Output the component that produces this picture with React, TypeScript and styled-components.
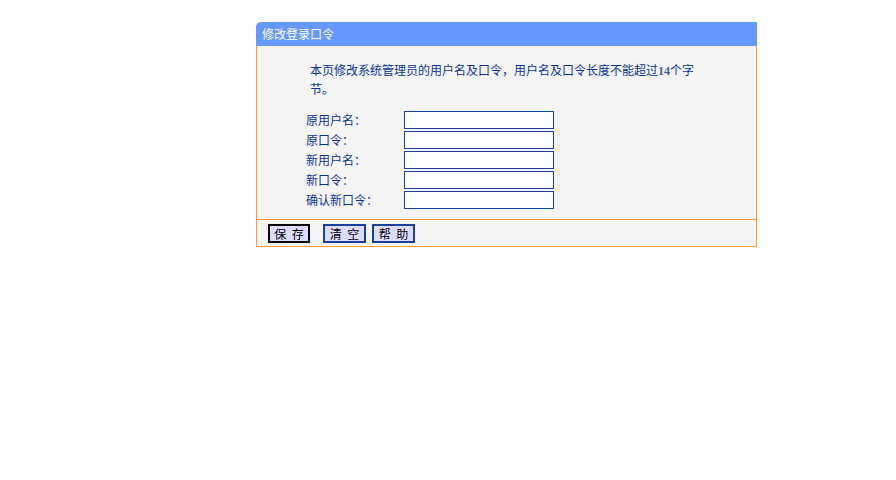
import React from "react";
import styled, { createGlobalStyle } from "styled-components";

const GlobalStyle = createGlobalStyle`
	html, body {
		margin: 0;
		padding: 0;
		background: #ffffff;
	}
	body {
		font-family: "Noto Sans CJK SC", "DejaVu Sans", sans-serif;
		font-size: 12px;
	}
`;

const Page = styled.div`
	padding: 22px 0 0 256px;
`;

const Panel = styled.div`
	width: 501px;
`;

const Header = styled.div`
	height: 24px;
	line-height: 24px;
	background: #6699ff;
	color: #ffffff;
	font-size: 12px;
	padding-left: 6px;
	border-top-left-radius: 5px;
`;

const Body = styled.div`
	background: #f4f4f4;
	border-left: 1px solid #ff9933;
	border-right: 1px solid #ff9933;
	padding: 15px 0 10px 49px;
	height: 148px;
`;

const Intro = styled.p`
	margin: 0 0 13px 4px;
	width: 390px;
	line-height: 18px;
	color: #0a3399;
`;

const Num = styled.span`
	font-family: "Liberation Serif", serif;
	font-weight: bold;
	color: #4a5f99;
`;

const Form = styled.div`
	display: grid;
	grid-template-columns: 98px 150px;
	row-gap: 2px;
`;

const Label = styled.label`
	color: #0a3399;
	line-height: 18px;
	white-space: pre;
`;

const Field = styled.input`
	box-sizing: border-box;
	width: 150px;
	height: 18px;
	margin: 0;
	padding: 0 2px;
	border: 1px solid #1c3f9f;
	background: #ffffff;
	outline: none;
`;

const Footer = styled.div`
	display: flex;
	align-items: flex-start;
	background: #f4f4f4;
	border: 1px solid #ff9933;
	padding: 4px 0 0 11px;
	box-sizing: border-box;
	height: 28px;
`;

const Button = styled.button<{ $primary?: boolean }>`
	box-sizing: border-box;
	width: ${(p) => (p.$primary ? "42px" : "43px")};
	height: 19px;
	margin: 0 ${(p) => (p.$primary ? "13px" : "6px")} 0 0;
	padding: 0;
	background: #dcdcff;
	border: ${(p) => (p.$primary ? "2px solid #000000" : "1px solid #1c3f9f")};
	box-shadow: ${(p) => (p.$primary ? "none" : "inset 0 0 0 1px #1c3f9f")};
	color: #000000;
	font-family: "Noto Sans CJK SC", sans-serif;
	font-size: 12px;
	line-height: 15px;
	white-space: pre;
	word-spacing: 3px;
	cursor: pointer;
`;

const fields = ["原用户名：", "原口令：", "新用户名：", "新口令：", "确认新口令："];

export default function App() {
	return (
		<>
			<GlobalStyle />
			<Page>
				<Panel>
					<Header>修改登录口令</Header>
					<Body>
						<Intro>
							本页修改系统管理员的用户名及口令，用户名及口令长度不能超过<Num>14</Num>个字节。
						</Intro>
						<Form>
							{fields.map((f, i) => (
								<React.Fragment key={f}>
									<Label>{f}</Label>
									<Field type={i % 2 === 1 ? "password" : "text"} />
								</React.Fragment>
							))}
						</Form>
					</Body>
					<Footer>
						<Button $primary>保 存</Button>
						<Button>清 空</Button>
						<Button>帮 助</Button>
					</Footer>
				</Panel>
			</Page>
		</>
	);
}
